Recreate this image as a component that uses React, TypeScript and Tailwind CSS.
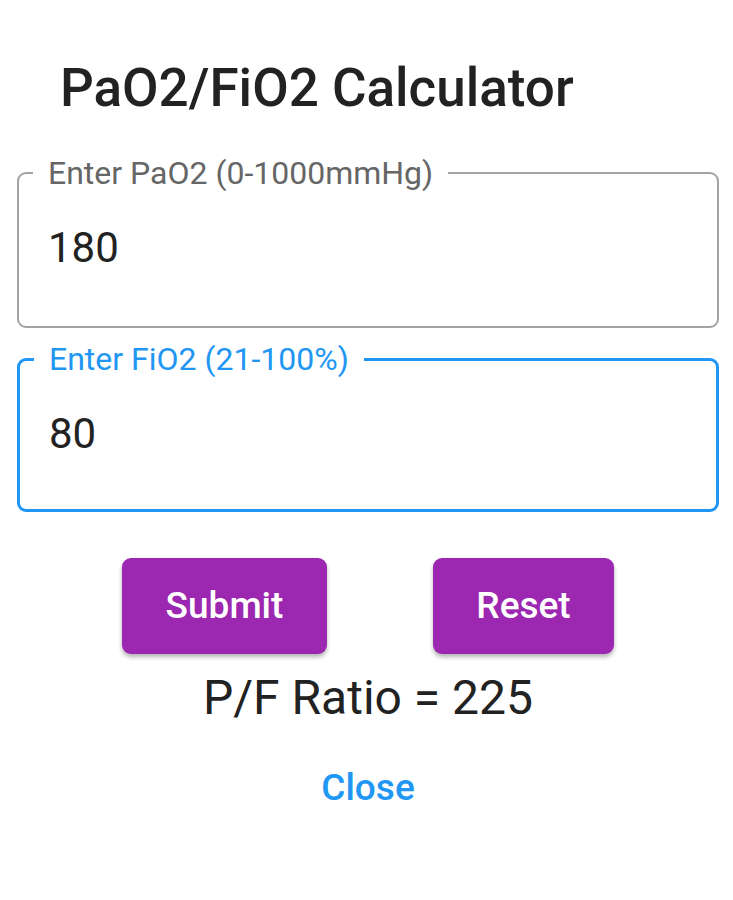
import { useState } from "react";

function OutlinedField(props: { label: string; value: string; focused?: boolean }) {
  const border = props.focused ? "border-[3px] border-[#2196f3]" : "border-2 border-[#a3a3a3]";
  const labelColor = props.focused ? "text-[#2196f3]" : "text-[#666666]";
  const bottom = props.focused ? "pb-[54px]" : "pb-[57px]";
  return (
    <fieldset className={`rounded-[9px] px-[14px] ${border}`}>
      <legend className={`px-[15px] text-[32px] leading-[28px] ${labelColor}`}>{props.label}</legend>
      <div className={`pl-[15px] pt-[40px] text-[42px] leading-[42px] text-[#222222] ${bottom}`}>{props.value}</div>
    </fieldset>
  );
}

export default function App() {
  const [pao2] = useState("180");
  const [fio2] = useState("80");
  const ratio = Math.round(Number(pao2) / (Number(fio2) / 100));

  return (
    <div className="min-h-[900px] bg-white pl-[17px] pr-[14px] pt-[58px] font-['Roboto',sans-serif]">
      <h1 className="pl-[43px] text-[53px] font-medium leading-[60px] text-[#222222]">PaO2/FiO2 Calculator</h1>

      <div className="mt-[41px] flex flex-col gap-[17px]">
        <OutlinedField label="Enter PaO2 (0-1000mmHg)" value={pao2} />
        <OutlinedField label="Enter FiO2 (21-100%)" value={fio2} focused />
      </div>

      <div className="mt-[46px] flex justify-center gap-[106px]">
        <button className="h-[96px] w-[205px] rounded-[9px] bg-[#9c27b0] text-[37px] font-medium text-white shadow-[0_3px_4px_rgba(0,0,0,0.3)]">
          Submit
        </button>
        <button className="h-[96px] w-[181px] rounded-[9px] bg-[#9c27b0] text-[37px] font-medium text-white shadow-[0_3px_4px_rgba(0,0,0,0.3)]">
          Reset
        </button>
      </div>

      <p className="mt-[14px] text-center text-[48px] leading-[60px] text-[#222222]">P/F Ratio = {ratio}</p>

      <div className="mt-[30px] flex justify-center">
        <button className="text-[37px] font-medium leading-[60px] text-[#2196f3]">Close</button>
      </div>
    </div>
  );
}
